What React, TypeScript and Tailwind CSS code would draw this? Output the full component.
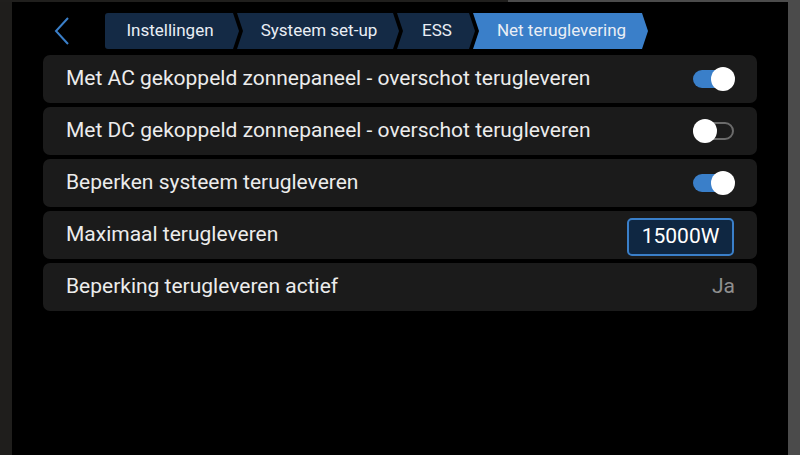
import React from "react";

function Crumb({ label, active, first, width }: { label: string; active?: boolean; first?: boolean; width: number }) {
  const fill = active ? "#3a7fc9" : "#142a45";
  const h = 36;
  const n = 6;
  const w = width;
  const d = first
    ? `M3 0 H${w - n} L${w} ${h / 2} L${w - n} ${h} H3 Q0 ${h} 0 ${h - 3} V3 Q0 0 3 0 Z`
    : `M0 0 H${w - n} L${w} ${h / 2} L${w - n} ${h} H0 L${n} ${h / 2} Z`;
  return (
    <div className="relative flex items-center justify-center h-[36px] -mr-[2px]" style={{ width: w }}>
      <svg className="absolute inset-0" width={w} height={h} viewBox={`0 0 ${w} ${h}`}>
        <path d={d} fill={fill} />
      </svg>
      <span className={`relative text-[17px] text-[#e9eef5] ${first ? "pr-[4px]" : "pl-[2px]"}`}>{label}</span>
    </div>
  );
}

function Toggle({ on }: { on: boolean }) {
  return on ? (
    <div className="relative w-[42px] h-[24px] flex items-center">
      <div className="w-[40px] h-[18px] rounded-full bg-[#3a7fc9]" />
      <div className="absolute right-0 top-0 w-[24px] h-[24px] rounded-full bg-white" />
    </div>
  ) : (
    <div className="relative w-[42px] h-[24px] flex items-center">
      <div className="w-[41px] h-[18px] rounded-full border-2 border-[#6b6b6b]" />
      <div className="absolute left-0 top-0 w-[24px] h-[24px] rounded-full bg-white" />
    </div>
  );
}

function Row({ label, children }: { label: string; children: React.ReactNode }) {
  return (
    <div className="flex items-center justify-between h-[48px] rounded-[7px] bg-[#1b1b1b] pl-[23px] pr-[22px]">
      <span className="text-[21px] text-[#ececec]">{label}</span>
      {children}
    </div>
  );
}

export default function App() {
  return (
    <div className="w-[800px] h-[455px] bg-[#4b4b4b] flex flex-col overflow-hidden" style={{ fontFamily: "Roboto, 'Noto Sans', sans-serif" }}>
      <div className="flex h-[2px]">
        <div className="w-[508px] bg-[#201f1d]" />
        <div className="flex-1 bg-[#4b4b4b]" />
      </div>
      <div className="flex flex-1">
        <div className="w-[12px] bg-[#1f1e1c]" />
        <div className="w-[776px] bg-black flex flex-col">
          <div className="flex items-center h-[52px] pt-[6px]">
            <div className="w-[93px] flex items-center pl-[42px]">
              <svg width="16" height="28" viewBox="0 0 16 28">
                <path d="M14 1 L2 14 L14 27" fill="none" stroke="#3a7fc9" strokeWidth="2" />
              </svg>
            </div>
            <Crumb label="Instellingen" first width={134} />
            <Crumb label="Systeem set-up" width={162} />
            <Crumb label="ESS" width={78} />
            <Crumb label="Net teruglevering" active width={175} />
          </div>
          <div className="flex flex-col gap-[4px] px-[31px] pt-[1px]">
            <Row label="Met AC gekoppeld zonnepaneel - overschot terugleveren">
              <Toggle on />
            </Row>
            <Row label="Met DC gekoppeld zonnepaneel - overschot terugleveren">
              <Toggle on={false} />
            </Row>
            <Row label="Beperken systeem terugleveren">
              <Toggle on />
            </Row>
            <Row label="Maximaal terugleveren">
              <div className="w-[107px] h-[38px] rounded-[5px] border-2 border-[#3a7fc9] bg-[#0f2742] flex items-center justify-center text-[21px] text-white mr-[1px] mt-[3px]">
                15000W
              </div>
            </Row>
            <Row label="Beperking terugleveren actief">
              <span className="text-[21px] text-[#8f8f8f]">Ja</span>
            </Row>
          </div>
        </div>
        <div className="flex-1 bg-[#4b4b4b]" />
      </div>
    </div>
  );
}
